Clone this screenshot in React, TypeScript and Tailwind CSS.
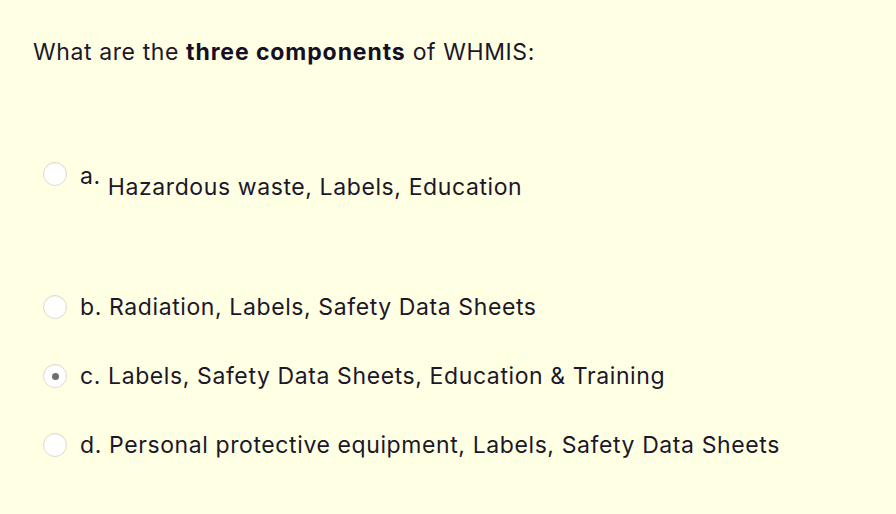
const OPTIONS = [
  { key: 'b', text: 'Radiation, Labels, Safety Data Sheets', checked: false },
  { key: 'c', text: 'Labels, Safety Data Sheets, Education & Training', checked: true },
  { key: 'd', text: 'Personal protective equipment, Labels, Safety Data Sheets', checked: false },
];

function Radio({ checked }: { checked: boolean }) {
  return (
    <span className="flex h-6 w-6 shrink-0 items-center justify-center rounded-full border border-[#dedbc8] bg-white shadow-[inset_0_1px_1px_rgba(0,0,0,0.04)]">
      {checked && <span className="h-[7px] w-[7px] rounded-full bg-[#6f6f6f]" />}
    </span>
  );
}

export default function App() {
  return (
    <div className="min-h-screen w-full bg-[#ffffe4] font-['Inter','Noto_Sans',sans-serif] text-[23px] tracking-[0.6px] text-[#1c1729]">
      <div className="px-[33px] pt-[38px]">
        {/* Question */}
        <p className="leading-[28px]">
          What are the <strong className="font-bold tracking-[0.9px] text-[#150f26]">three components</strong> of WHMIS:
        </p>

        {/* Option a */}
        <div className="mt-[96px] ml-[10px] flex items-start">
          <Radio checked={false} />
          <div className="ml-[13px] flex items-start">
            <span className="leading-[28px]">a.</span>
            <span className="ml-[7px] mt-[11px] leading-[28px]">Hazardous waste, Labels, Education</span>
          </div>
        </div>

        {/* Options b-d */}
        <div className="mt-[92px] ml-[10px] flex flex-col gap-[41px]">
          {OPTIONS.map((o) => (
            <label key={o.key} className="flex h-[28px] items-center">
              <Radio checked={o.checked} />
              <span className="ml-[13px] leading-[28px]">
                {o.key}. {o.text}
              </span>
            </label>
          ))}
        </div>
      </div>
    </div>
  );
}
